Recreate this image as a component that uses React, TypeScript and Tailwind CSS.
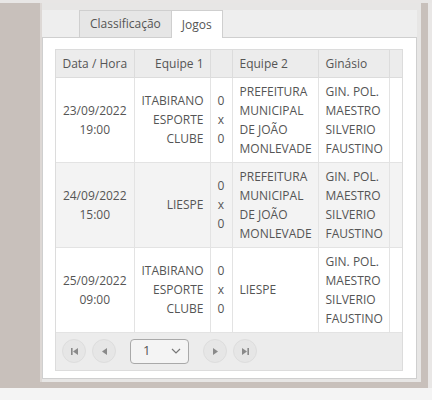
import React from 'react';

type Jogo = {
  data: string;
  hora: string;
  equipe1: string[];
  equipe2: string[];
  ginasio: string[];
};

const jogos: Jogo[] = [
  {
    data: '23/09/2022',
    hora: '19:00',
    equipe1: ['ITABIRANO', 'ESPORTE', 'CLUBE'],
    equipe2: ['PREFEITURA', 'MUNICIPAL', 'DE JOÃO', 'MONLEVADE'],
    ginasio: ['GIN. POL.', 'MAESTRO', 'SILVERIO', 'FAUSTINO'],
  },
  {
    data: '24/09/2022',
    hora: '15:00',
    equipe1: ['LIESPE'],
    equipe2: ['PREFEITURA', 'MUNICIPAL', 'DE JOÃO', 'MONLEVADE'],
    ginasio: ['GIN. POL.', 'MAESTRO', 'SILVERIO', 'FAUSTINO'],
  },
  {
    data: '25/09/2022',
    hora: '09:00',
    equipe1: ['ITABIRANO', 'ESPORTE', 'CLUBE'],
    equipe2: ['LIESPE'],
    ginasio: ['GIN. POL.', 'MAESTRO', 'SILVERIO', 'FAUSTINO'],
  },
];

const Lines = ({ items }: { items: string[] }) => (
  <>
    {items.map((l) => (
      <div key={l}>{l}</div>
    ))}
  </>
);

// round pager button
const PagerButton = ({ children }: { children: React.ReactNode }) => (
  <button className="w-[24px] h-[24px] rounded-full bg-[#e6e6e6] border border-[#dddddd] flex items-center justify-center text-[#8a8a8a]">
    {children}
  </button>
);

const App = () => {
  return (
    <div className="w-[432px] h-[400px] bg-[#f4f4f4] font-['Open_Sans',sans-serif] text-[12px] text-[#555555]">
      <div className="h-[3px] bg-[#e8e6e5]" />
      <div className="flex h-[385px]">
        <div className="flex w-[428px] bg-[#c8c0bb] pl-[40px] pr-[7px] pb-[6px]">
          <div className="flex-1 flex flex-col bg-[#e7e6e5] border-l-2 border-[#ddd8d5]">
            <div className="h-[7px]" />
            {/* tabs */}
            <div className="flex items-end h-[28px] bg-[#eeeeee] pl-[37px] border-b border-[#cfcfcf] mr-[4px]">
              <div className="h-[27px] px-[10px] flex items-center bg-[#e6e6e6] border border-b-0 border-[#cfcfcf] leading-none">
                Classificação
              </div>
              <div className="h-[28px] -mb-px px-[10px] flex items-center bg-white border border-b-0 border-l-0 border-[#cfcfcf] leading-none">
                Jogos
              </div>
            </div>
            {/* content */}
            <div className="flex-1 bg-white border border-t-0 border-[#cfcfcf] mr-[4px] mb-[3px] pl-[12px] pr-[8px] pt-[11px]">
              <div className="w-[348px] border border-[#dcdcdc]">
                <table className="w-full table-fixed border-collapse leading-[19px]">
                  <colgroup>
                    <col className="w-[78px]" />
                    <col className="w-[76px]" />
                    <col className="w-[22px]" />
                    <col className="w-[86px]" />
                    <col className="w-[71px]" />
                    <col className="w-[13px]" />
                  </colgroup>
                  <thead>
                    <tr className="h-[27px] bg-[#ececec] border-b border-[#dcdcdc]">
                      <th className="font-normal text-center border-r border-[#dcdcdc]">Data / Hora</th>
                      <th className="font-normal text-right pr-[6px] border-r border-[#dcdcdc]">Equipe 1</th>
                      <th className="border-r border-[#dcdcdc]" />
                      <th className="font-normal text-left pl-[7px] border-r border-[#dcdcdc]">Equipe 2</th>
                      <th className="font-normal text-left pl-[7px] border-r border-[#dcdcdc]">Ginásio</th>
                      <th />
                    </tr>
                  </thead>
                  <tbody>
                    {jogos.map((j, i) => (
                      <tr
                        key={j.data}
                        className={`${i % 2 === 1 ? 'bg-[#f3f3f3]' : 'bg-white'} border-b border-[#e3e3e3] h-[84px]`}
                      >
                        <td className="text-center align-middle border-r border-[#e3e3e3]">
                          <div>{j.data}</div>
                          <div>{j.hora}</div>
                        </td>
                        <td className="text-right align-middle pr-[6px] border-r border-[#e3e3e3]">
                          <Lines items={j.equipe1} />
                        </td>
                        <td className="text-center align-middle border-r border-[#e3e3e3]">
                          <div>0</div>
                          <div>x</div>
                          <div>0</div>
                        </td>
                        <td className="text-left align-middle pl-[7px] py-[4px] border-r border-[#e3e3e3]">
                          <Lines items={j.equipe2} />
                        </td>
                        <td className="text-left align-middle pl-[7px] py-[4px] border-r border-[#e3e3e3]">
                          <Lines items={j.ginasio} />
                        </td>
                        <td />
                      </tr>
                    ))}
                  </tbody>
                </table>
                {/* pager */}
                <div className="h-[37px] bg-[#ececec] flex items-center pl-[6px] gap-[6px]">
                  <PagerButton>
                    <svg width="9" height="9" viewBox="0 0 9 9" fill="currentColor">
                      <rect x="1" y="1" width="1.6" height="7" />
                      <path d="M8 1 L3 4.5 L8 8 Z" />
                    </svg>
                  </PagerButton>
                  <PagerButton>
                    <svg width="9" height="9" viewBox="0 0 9 9" fill="currentColor">
                      <path d="M7 1 L2 4.5 L7 8 Z" />
                    </svg>
                  </PagerButton>
                  <div className="ml-[8px] mr-[8px] w-[59px] h-[25px] rounded-[4px] border border-[#a9a9a9] bg-[#f4f4f4] flex items-center justify-between pl-[12px] pr-[7px] text-[13px]">
                    <span>1</span>
                    <svg width="10" height="6" viewBox="0 0 10 6" fill="none" stroke="#777" strokeWidth="1.2">
                      <path d="M1 1 L5 5 L9 1" />
                    </svg>
                  </div>
                  <PagerButton>
                    <svg width="9" height="9" viewBox="0 0 9 9" fill="currentColor">
                      <path d="M2 1 L7 4.5 L2 8 Z" />
                    </svg>
                  </PagerButton>
                  <PagerButton>
                    <svg width="9" height="9" viewBox="0 0 9 9" fill="currentColor">
                      <path d="M1 1 L6 4.5 L1 8 Z" />
                      <rect x="6.4" y="1" width="1.6" height="7" />
                    </svg>
                  </PagerButton>
                </div>
              </div>
            </div>
          </div>
        </div>
        <div className="w-[4px] bg-[#e9e7e6]" />
      </div>
    </div>
  );
};

export default App;
